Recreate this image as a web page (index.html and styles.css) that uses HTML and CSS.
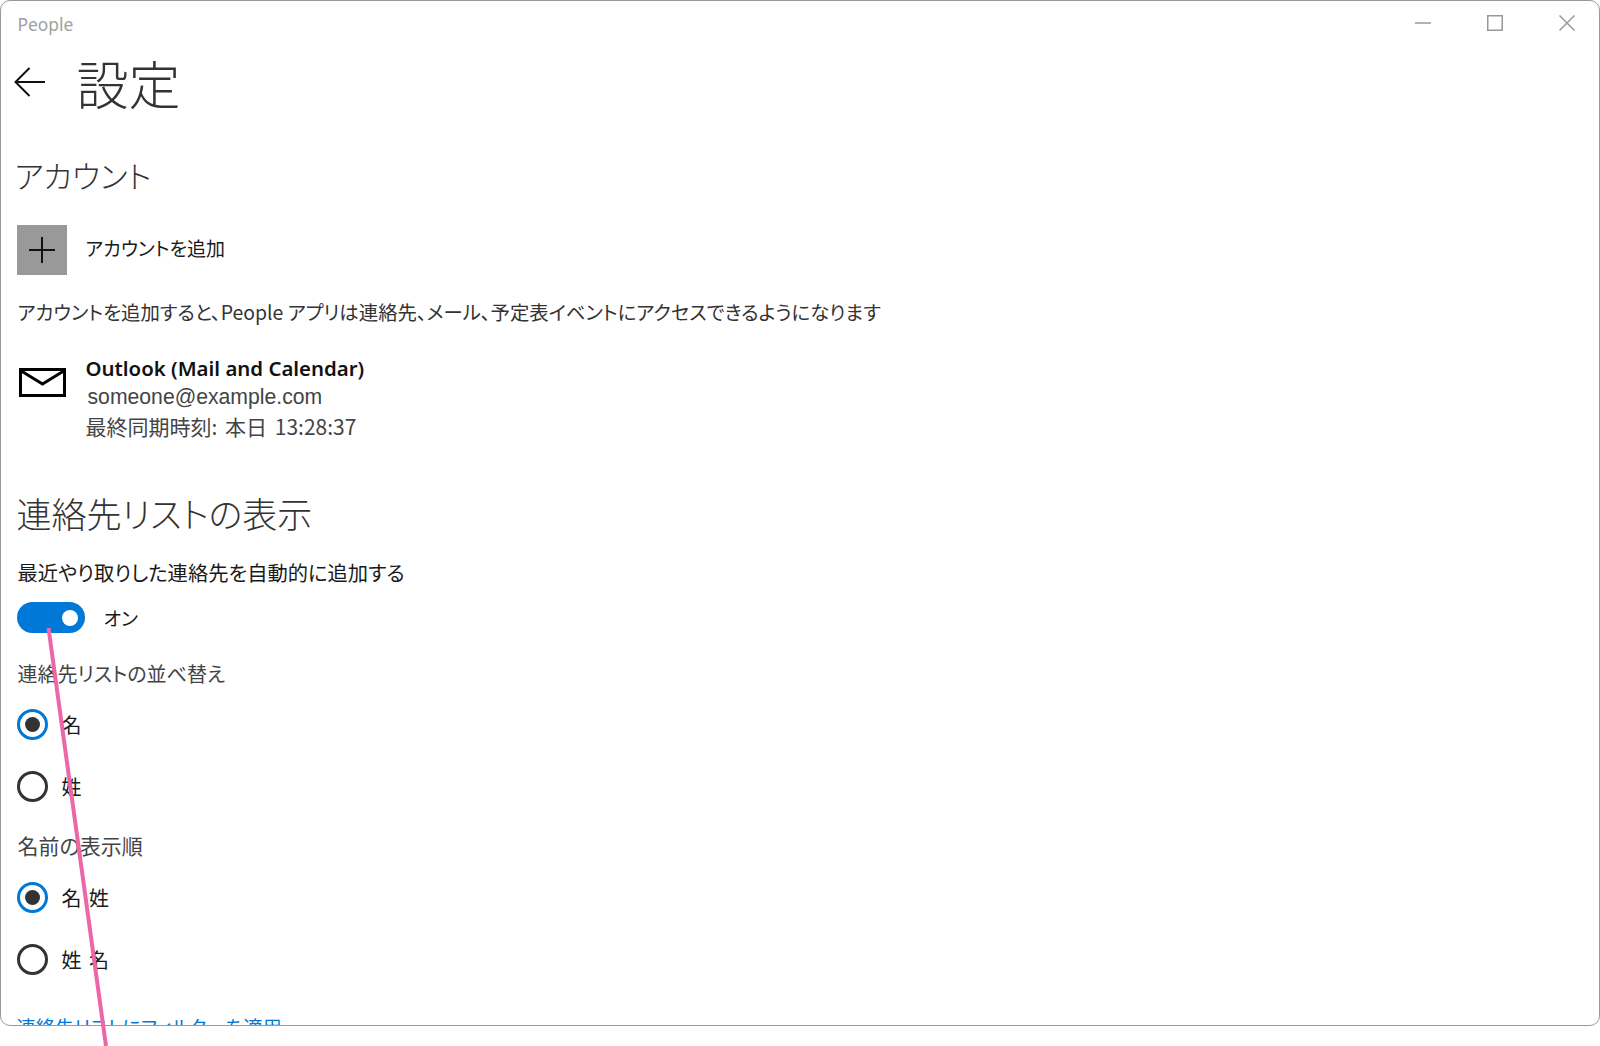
FILE: index.html
```html
<!DOCTYPE html>
<html lang="ja">
<head>
<meta charset="utf-8">
<title>People</title>
<link rel="stylesheet" href="styles.css">
</head>
<body>
<div class="window">
  <header class="titlebar">
    <span class="app-name">People</span>
    <div class="controls">
      <svg width="16" height="16" viewBox="0 0 16 16"><path d="M0 8h16" /></svg>
      <svg width="16" height="16" viewBox="0 0 16 16"><path d="M.75.75h14.500v14.500H.75z" /></svg>
      <svg width="16" height="16" viewBox="0 0 16 16"><path d="M.5.5l15 15M15.500.5l-15 15" /></svg>
    </div>
  </header>
  <div class="page-head">
    <svg class="back" width="32" height="30" viewBox="0 0 32 30"><path d="M31 15H2M15.500 1L1.500 15l14 14" /></svg>
    <h1>設定</h1>
  </div>
  <h2 class="accounts">アカウント</h2>
  <div class="add-row">
    <span class="add-box"><svg width="26" height="26" viewBox="0 0 26 26"><path d="M13 0v26M0 13h26" /></svg></span>
    <span class="add-label">アカウントを追加</span>
  </div>
  <p class="note">アカウントを追加すると、People アプリは連絡先、メール、予定表イベントにアクセスできるようになります</p>
  <div class="account">
    <svg class="mail" width="47" height="29" viewBox="0 0 47 29"><path d="M1.500 1.500h44v26h-44zM1.500 2.500L23.500 16 45.500 2.500" /></svg>
    <div class="account-info">
      <div class="account-name">Outlook (Mail and Calendar)</div>
      <div class="account-mail">someone@example.com</div>
      <div class="account-sync">最終同期時刻: 本日 13:28:37</div>
    </div>
  </div>
  <h2 class="list-title">連絡先リストの表示</h2>
  <div class="auto-label">最近やり取りした連絡先を自動的に追加する</div>
  <div class="toggle-row">
    <span class="toggle"><span class="thumb"></span></span>
    <span class="toggle-label">オン</span>
  </div>
  <div class="group-label">連絡先リストの並べ替え</div>
  <div class="radio-row first"><span class="radio on"></span><span class="radio-label">名</span></div>
  <div class="radio-row"><span class="radio"></span><span class="radio-label">姓</span></div>
  <div class="group-label second">名前の表示順</div>
  <div class="radio-row first"><span class="radio on"></span><span class="radio-label">名 姓</span></div>
  <div class="radio-row"><span class="radio"></span><span class="radio-label">姓 名</span></div>
  <a class="filter-link" href="#">連絡先リストにフィルターを適用</a>
</div>
<svg class="pointer" width="1600" height="1046" viewBox="0 0 1600 1046"><path d="M48.500 628L106 1046" /></svg>
</body>
</html>
```
FILE: styles.css
```css
* { box-sizing: border-box; }
html, body { margin: 0; height: 1046px; background: #fff; overflow: hidden; }
body {
  position: relative;
  font-family: "Noto Sans CJK JP", "Noto Sans", sans-serif;
  font-feature-settings: "palt";
  color: #1a1a1a;
}
svg { display: block; fill: none; }
.window {
  height: 1026px;
  border: 1.500px solid #999;
  border-radius: 10px;
  overflow: hidden;
  padding: 0 15.500px;
  display: flex;
  flex-direction: column;
}
.titlebar { height: 46px; flex: none; display: flex; justify-content: space-between; align-items: center; }
.app-name { font-family: "Noto Sans", sans-serif; font-size: 17.400px; color: #a0a0a0; margin-left: 1px; }
.controls { display: flex; gap: 56px; margin: -2px 9px 0 0; }
.controls svg { stroke: #999; stroke-width: 1.500; }
.page-head { display: flex; align-items: center; height: 72px; flex: none; }
.back { stroke: #111; stroke-width: 2; margin-left: -3px; margin-top: -2px; }
h1 { margin: 0 0 0 31px; font-size: 52px; font-weight: 200; line-height: 72px; color: #333; }
h2 { margin: 0; font-weight: 200; color: #333; flex: none; }
.accounts { margin: 34px 0 0 -2px; font-size: 31px; line-height: 44px; }
.add-row { display: flex; align-items: center; gap: 18px; margin-top: 28px; flex: none; }
.add-box { width: 50px; height: 50px; background: #999; display: flex; align-items: center; justify-content: center; }
.add-box svg { stroke: #111; stroke-width: 2; }
.add-label { font-size: 19px; line-height: 28px; padding-bottom: 4px; margin-left: 1px; }
.note { font-size: 19.400px; line-height: 28px; margin: 23px 0 0 1px; flex: none; color: #333; }
.account { display: flex; margin-top: 28px; flex: none; }
.mail { stroke: #000; stroke-width: 3; margin: 14px 0 0 2px; }
.account-info { margin-left: 20px; }
.account-name { font-family: "Noto Sans", sans-serif; font-size: 20.400px; font-weight: 600; line-height: 28px; color: #111; }
.account-mail { font-family: "Liberation Sans", sans-serif; font-size: 21.200px; line-height: 29px; color: #444; margin-left: 2px; }
.account-sync { font-size: 21px; line-height: 30px; color: #444; word-spacing: 3px; }
.list-title { margin-top: 48px; font-size: 35px; line-height: 48px; }
.auto-label { font-size: 20.300px; line-height: 28px; margin: 21px 0 0 1px; flex: none; }
.toggle-row { display: flex; align-items: center; gap: 19px; margin-top: 16px; flex: none; }
.toggle { width: 68px; height: 31px; background: #0078d7; border-radius: 16px; display: flex; align-items: center; justify-content: flex-end; padding-right: 7px; }
.thumb { width: 16px; height: 16px; border-radius: 50%; background: #fff; }
.toggle-label { font-size: 19px; line-height: 28px; }
.group-label { font-size: 20px; line-height: 28px; color: #444; margin: 27px 0 0 1px; flex: none; }
.group-label.second { font-size: 21px; margin-top: 29px; }
.radio-row { display: flex; align-items: center; gap: 14px; margin-top: 31px; height: 31px; flex: none; }
.radio-row.first { margin-top: 21px; }
.group-label.second + .radio-row.first { margin-top: 23px; }
.radio { width: 31px; height: 31px; border: 3px solid #333; border-radius: 50%; display: flex; align-items: center; justify-content: center; }
.radio.on { border-color: #0078d7; }
.radio.on::after { content: ""; width: 15px; height: 15px; border-radius: 50%; background: #333; }
.radio-label { font-size: 20px; line-height: 28px; word-spacing: 3px; }
.filter-link { font-size: 19.300px; line-height: 28px; color: #0078d7; text-decoration: none; margin-top: 38px; flex: none; }
.pointer { position: absolute; left: 0; top: 0; stroke: #ec66a8; stroke-width: 4; }
```
